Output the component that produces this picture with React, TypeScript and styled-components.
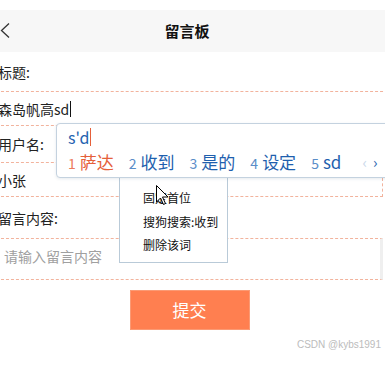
import React from 'react';
import styled, { createGlobalStyle } from 'styled-components';

const GlobalStyle = createGlobalStyle`
  body {
    margin: 0;
    background: #fff;
    font-family: "Noto Sans CJK SC", "Noto Sans", sans-serif;
    overflow: hidden;
  }
`

const Page = styled.div`
  position: relative;
  width: 385px;
  height: 366px;
  padding-top: 10px;
  box-sizing: border-box;
  overflow: hidden;
`

const Header = styled.div`
  height: 42px;
  background: #f7f7f7;
  display: grid;
  grid-template-columns: 40px 1fr 51px;
  align-items: center;
`

const Back = styled.div`
  display: flex;
  align-items: center;
  height: 100%;
`

const Title = styled.div`
  text-align: center;
  font-size: 15px;
  font-weight: bold;
  color: #111;
  line-height: 20px;
`

const Form = styled.div`
  display: flex;
  flex-direction: column;
  margin-left: -4px;
  width: 387px;
`

const Label = styled.div<{ $h: number }>`
  height: ${p => p.$h}px;
  display: flex;
  align-items: center;
  padding-left: 2px;
  font-size: 14px;
  line-height: 20px;
  color: #222;
`

const Field = styled.div<{ $wide?: boolean }>`
  height: 35px;
  box-sizing: border-box;
  border: 1px dashed #f2b39d;
  margin-right: ${p => (p.$wide ? '-20px' : '0')};
  display: flex;
  align-items: center;
  padding-left: 1px;
  font-size: 14px;
  line-height: 20px;
  color: #222;
`

const Caret = styled.span<{ $color: string; $h: number }>`
  display: inline-block;
  width: 1px;
  height: ${p => p.$h}px;
  background: ${p => p.$color};
  margin-left: 1px;
  vertical-align: middle;
`

const TextArea = styled.div`
  height: 42px;
  box-sizing: border-box;
  border: 1px dashed #f2b39d;
  border-right: 3px solid #efefef;
  padding: 7px 0 0 7px;
  font-size: 14px;
  line-height: 20px;
  color: #a0a0a0;
`

const Submit = styled.button`
  margin: 10px auto 0;
  width: 120px;
  height: 40px;
  background: #ff7f50;
  border: 1px solid #fb9a74;
  color: #fff;
  font-family: inherit;
  font-size: 17px;
  line-height: 22px;
  padding: 0;
`

const Ime = styled.div`
  position: absolute;
  left: 56px;
  top: 123px;
  width: 340px;
  height: 55px;
  box-sizing: border-box;
  border: 1px solid #c4d2df;
  border-radius: 4px;
  background: #fff;
  box-shadow: 0 1px 3px rgba(60, 90, 120, 0.12);
  padding: 2px 0 0 11px;
  z-index: 3;
`

const Compose = styled.div`
  font-size: 16px;
  line-height: 20px;
  color: #2563b0;
  height: 22px;
  display: flex;
  align-items: center;
`

const Candidates = styled.div`
  display: flex;
  align-items: center;
  height: 28px;
`

const Cand = styled.span<{ $first?: boolean }>`
  display: flex;
  align-items: baseline;
  margin-right: 15px;
  color: ${p => (p.$first ? '#e5603a' : '#1f5fae')};
  font-size: 17px;
  line-height: 22px;
`

const Num = styled.span<{ $first?: boolean }>`
  font-size: 14px;
  margin-right: 4px;
  color: ${p => (p.$first ? '#ec7a5e' : '#5a8dc8')};
`

const Arrows = styled.span`
  display: flex;
  gap: 6px;
  margin-left: 6px;
  font-size: 15px;
  color: #2a66b0;
  line-height: 22px;
`

const Faint = styled.span`
  color: #c9d8ea;
`

const Menu = styled.div`
  position: absolute;
  left: 119px;
  top: 175px;
  width: 109px;
  height: 88px;
  box-sizing: border-box;
  border: 1px solid #b9cad8;
  background: #fff;
  padding-top: 10px;
  z-index: 2;
`

const MenuItem = styled.div`
  height: 23.5px;
  line-height: 23.5px;
  padding-left: 23px;
  font-size: 12px;
  color: #111;
`

const Cursor = styled.svg`
  position: absolute;
  left: 156px;
  top: 185px;
  z-index: 4;
`

const Watermark = styled.div`
  position: absolute;
  right: 4px;
  top: 339px;
  font-family: "Liberation Sans", Arial, sans-serif;
  font-size: 10px;
  line-height: 12px;
  color: #bcbcbc;
`

const App = () => (
  <Page>
    <GlobalStyle />
    <Header>
      <Back>
        <svg width="12" height="18" viewBox="0 0 12 18">
          <polyline points="9,1.5 1.5,8.5 9,15.5" fill="none" stroke="#333" strokeWidth="1.3" />
        </svg>
      </Back>
      <Title>留言板</Title>
      <div />
    </Header>
    <Form>
      <Label $h={39}>标题:</Label>
      <Field $wide>
        森岛帆高sd<Caret $color="#111" $h={16} />
      </Field>
      <Label $h={36}>用户名:</Label>
      <Field>小张</Field>
      <Label $h={41}>留言内容:</Label>
      <TextArea>请输入留言内容</TextArea>
      <Submit>提交</Submit>
    </Form>

    <Menu>
      <MenuItem>固定首位</MenuItem>
      <MenuItem>搜狗搜索:收到</MenuItem>
      <MenuItem>删除该词</MenuItem>
    </Menu>

    <Ime>
      <Compose>
        s'd<Caret $color="#e5603a" $h={18} />
      </Compose>
      <Candidates>
        <Cand $first><Num $first>1</Num>萨达</Cand>
        <Cand><Num>2</Num>收到</Cand>
        <Cand><Num>3</Num>是的</Cand>
        <Cand><Num>4</Num>设定</Cand>
        <Cand><Num>5</Num>sd</Cand>
        <Arrows><Faint>‹</Faint><span>›</span></Arrows>
      </Candidates>
    </Ime>

    <Cursor width="13" height="21" viewBox="0 0 13 21">
      <path d="M0.5,0.5 L0.5,17 L4.5,13 L7.5,19.5 L9.5,18.5 L6.5,12 L12,12 Z" fill="#fff" stroke="#000" strokeWidth="1" />
    </Cursor>

    <Watermark>CSDN @kybs1991</Watermark>
  </Page>
)

export default App;
